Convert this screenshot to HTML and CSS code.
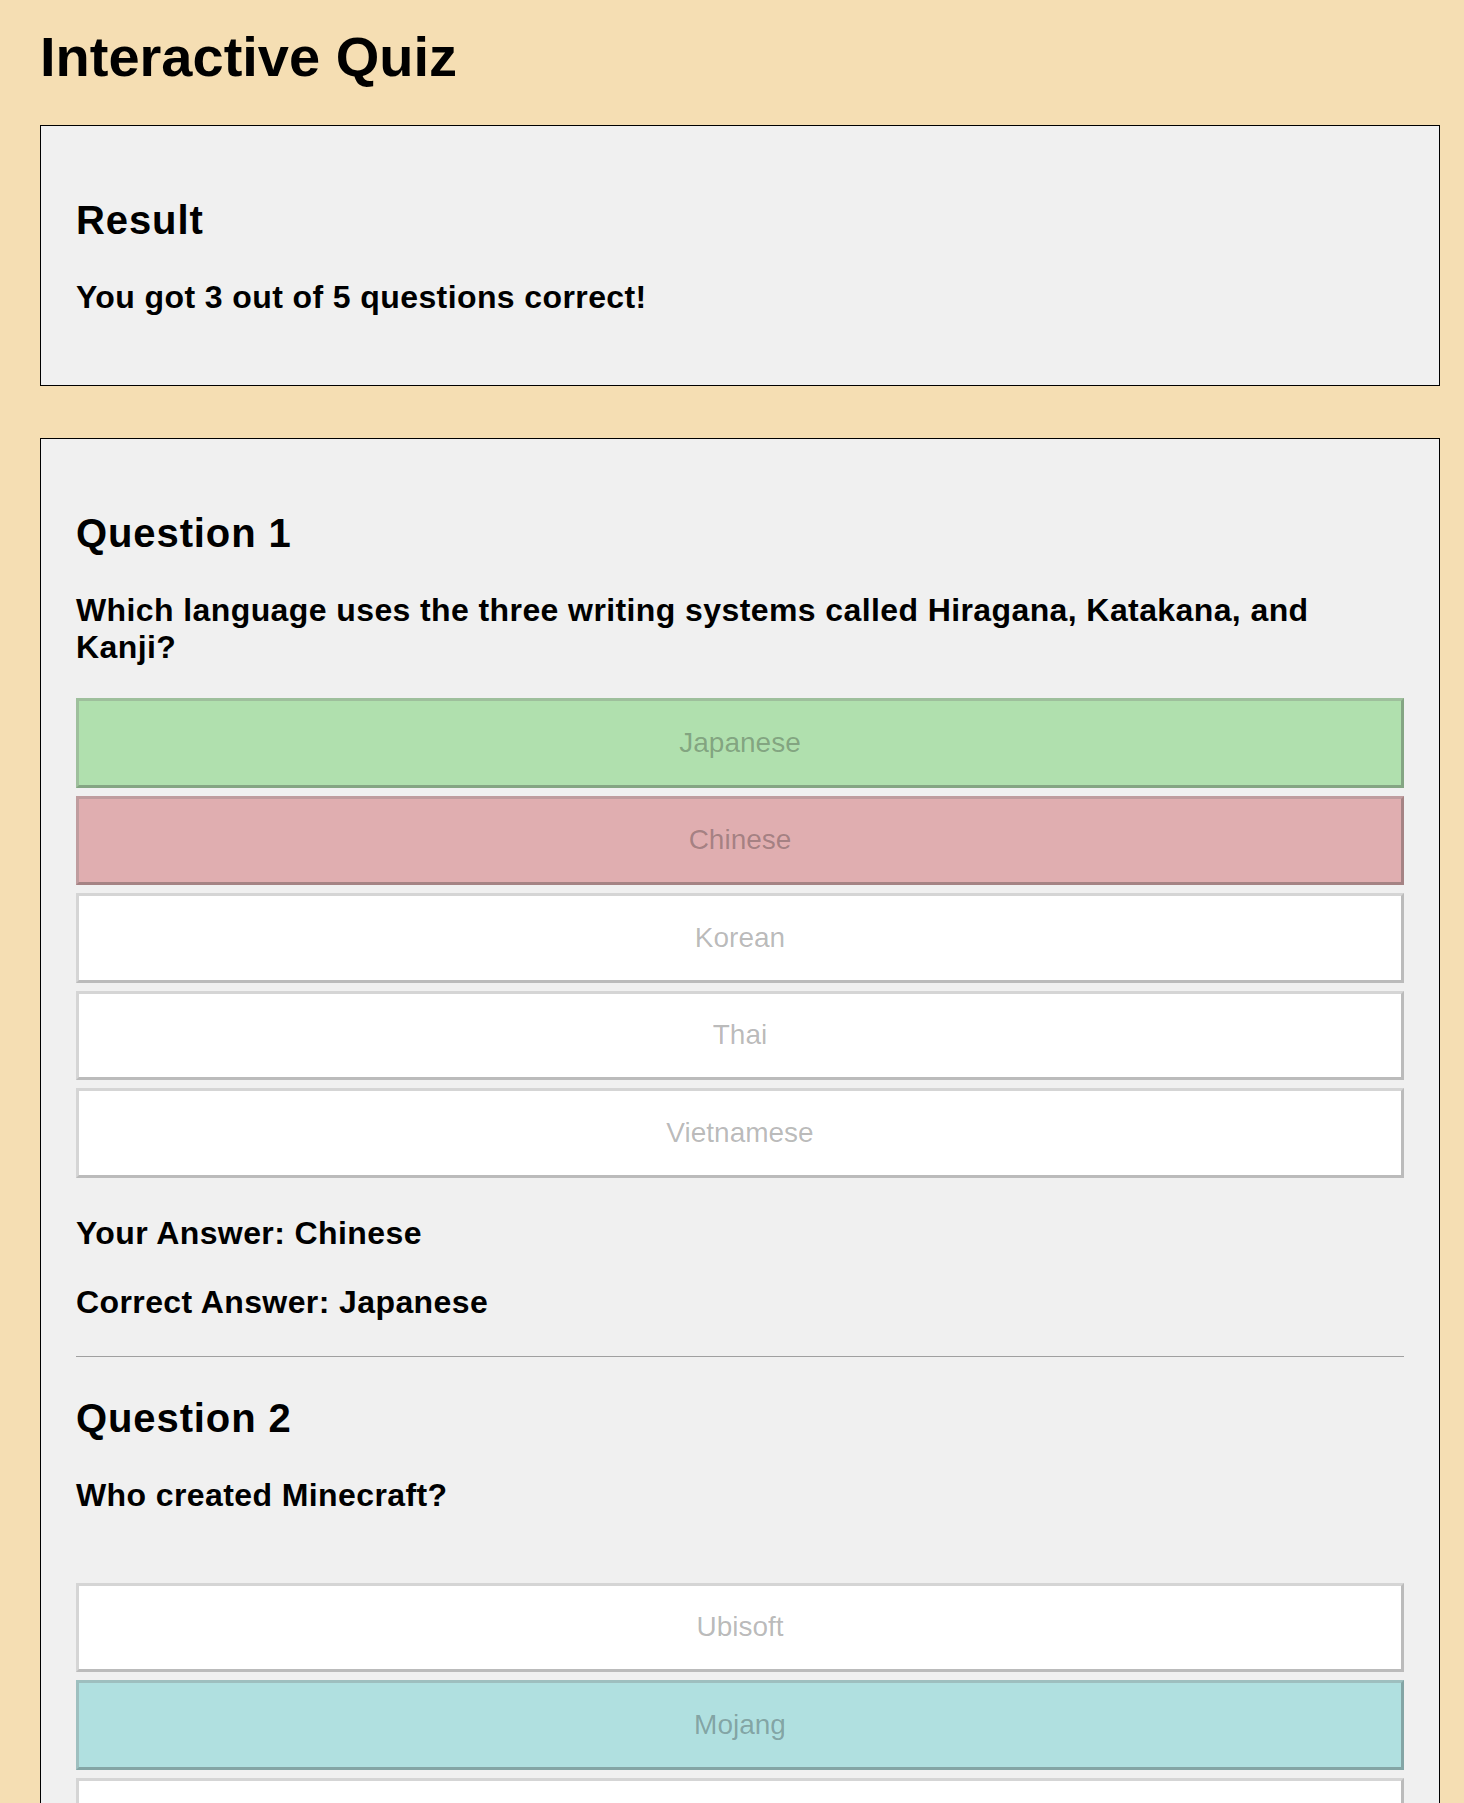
FILE: index.html
```html
<!DOCTYPE html>
<html lang="en">
<head>
<meta charset="utf-8">
<title>Interactive Quiz</title>
<link rel="stylesheet" href="styles.css">
</head>
<body>
<main class="page">
  <h1 class="title">Interactive Quiz</h1>

  <section class="card card-result">
    <h2 class="card-heading">Result</h2>
    <p class="text">You got 3 out of 5 questions correct!</p>
  </section>

  <section class="card">
    <div class="question">
      <h2 class="card-heading">Question 1</h2>
      <p class="text q-text">Which language uses the three writing systems called Hiragana, Katakana, and Kanji?</p>
      <div class="options">
        <button class="opt opt-correct" disabled>Japanese</button>
        <button class="opt opt-wrong" disabled>Chinese</button>
        <button class="opt" disabled>Korean</button>
        <button class="opt" disabled>Thai</button>
        <button class="opt" disabled>Vietnamese</button>
      </div>
      <p class="text">Your Answer: Chinese</p>
      <p class="text">Correct Answer: Japanese</p>
    </div>
    <hr class="divider">
    <div class="question">
      <h2 class="card-heading">Question 2</h2>
      <p class="text q-text">Who created Minecraft?</p>
      <div class="options">
        <button class="opt" disabled>Ubisoft</button>
        <button class="opt opt-right" disabled>Mojang</button>
        <button class="opt" disabled>Electronic Arts</button>
        <button class="opt" disabled>Valve</button>
        <button class="opt" disabled>Rockstar Games</button>
      </div>
      <p class="text">Your Answer: Mojang</p>
      <p class="text">Correct Answer: Mojang</p>
    </div>
  </section>
</main>
</body>
</html>
```

FILE: styles.css
```css
html {
  background: #f5deb3;
}

body {
  margin: 0;
  background: #f5deb3;
  color: #000;
  font-family: "Liberation Sans", Arial, sans-serif;
}

.page {
  width: 1400px;
  padding: 24px 0 40px 40px;
}

.title {
  margin: 0 0 36px;
  font-size: 56px;
  font-weight: bold;
  line-height: 65px;
}

.card {
  background: #f0f0f0;
  border: 1px solid #000;
  padding: 35px;
  margin-bottom: 52px;
}

.card-result {
  padding-bottom: 37px;
}

.card-heading {
  margin: 36px 0;
  font-size: 40px;
  font-weight: bold;
  line-height: 46px;
  letter-spacing: 0.9px;
}

.text {
  margin: 32px 0;
  font-size: 32px;
  font-weight: bold;
  line-height: 37px;
  letter-spacing: 0.4px;
}

.q-text {
  min-height: 74px;
}

.options {
  display: flex;
  flex-direction: column;
  gap: 8px;
  margin: 32px 0 37px;
}

.opt {
  display: block;
  width: 100%;
  box-sizing: border-box;
  margin: 0;
  padding: 25.75px 10px;
  font-family: "Liberation Sans", Arial, sans-serif;
  font-size: 28px;
  line-height: 32px;
  text-align: center;
  color: rgba(16, 16, 16, 0.3);
  background: #ffffff;
  border: 3px outset rgba(118, 118, 118, 0.3);
  border-radius: 0;
}

.opt-correct {
  background: #b0e0ae;
}

.opt-wrong {
  background: #e0aeb0;
}

.opt-right {
  background: #b0e0e0;
}

.divider {
  height: 0;
  margin: 35px 0 38px;
  border: 0;
  border-top: 1px solid #a0a0a0;
}
```
